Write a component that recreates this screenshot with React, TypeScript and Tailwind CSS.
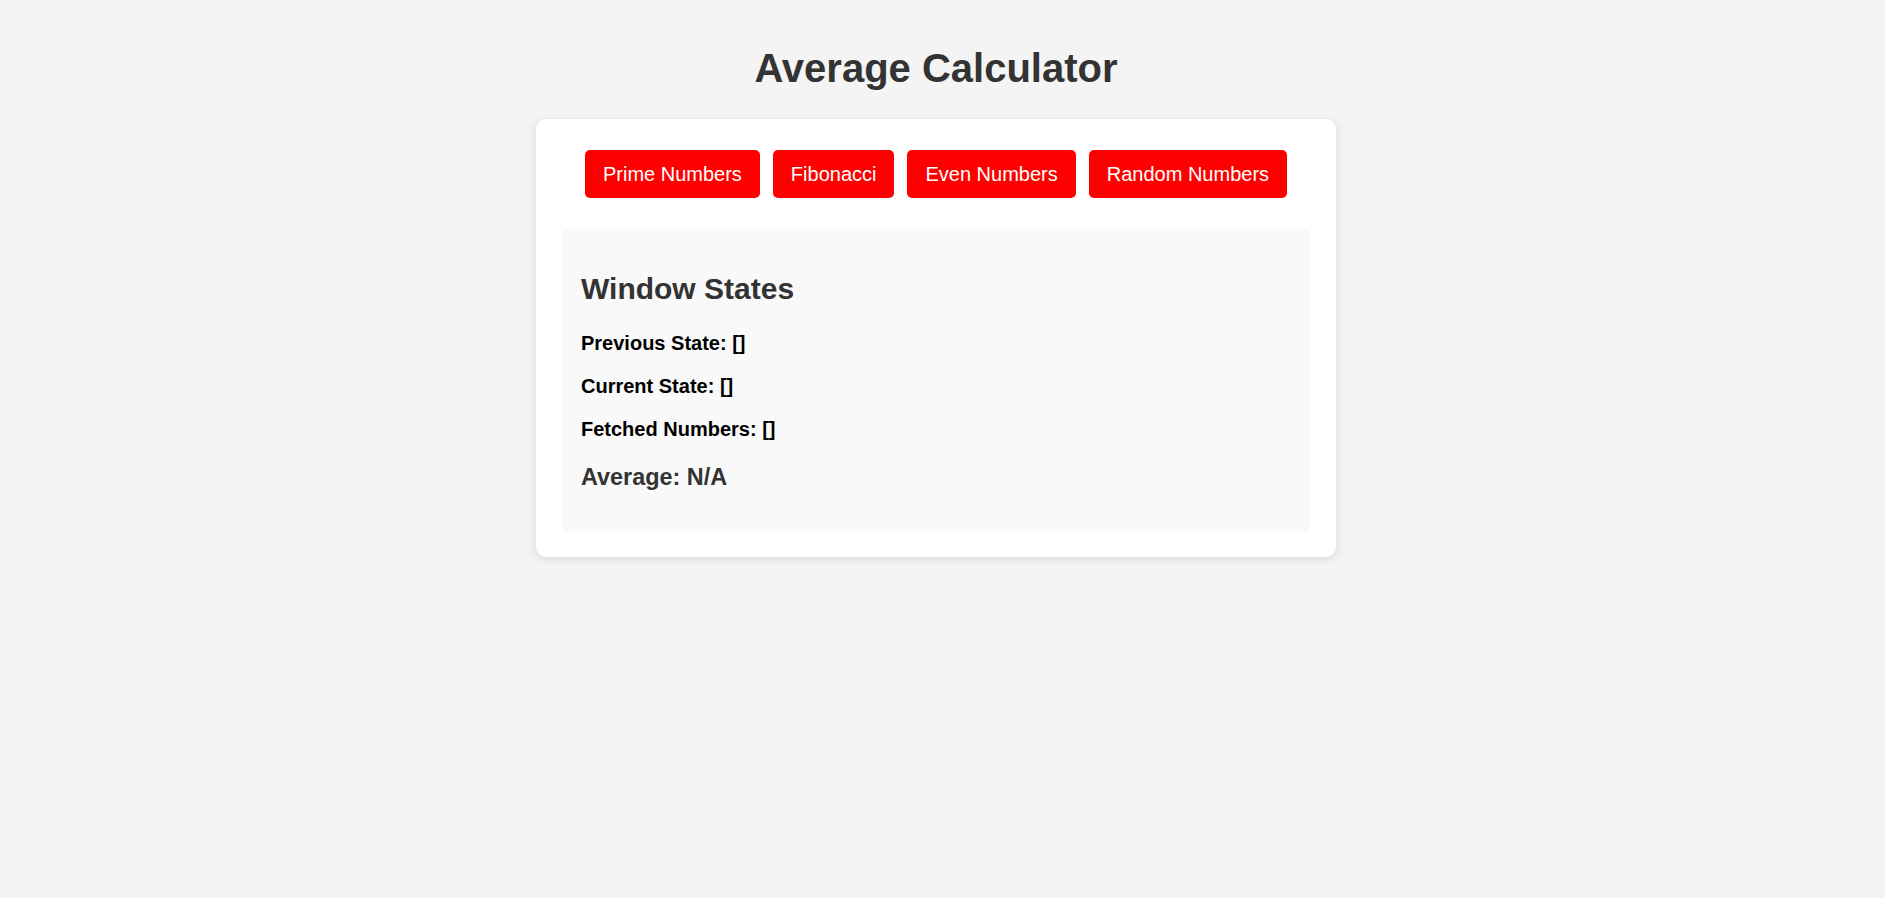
export default function App() {
  const sources = ["Prime Numbers", "Fibonacci", "Even Numbers", "Random Numbers"];

  const states = [
    { label: "Previous State:", value: "[]" },
    { label: "Current State:", value: "[]" },
    { label: "Fetched Numbers:", value: "[]" },
  ];

  return (
    <div className="min-h-screen w-full bg-[#f4f4f4] pt-[45px] pr-[13px] font-['Liberation_Sans',Arial,sans-serif]">
      <h1 className="text-center text-[40px] leading-[46px] font-bold text-[#333333] mb-[28px]">
        Average Calculator
      </h1>

      <div className="mx-auto w-[800px] rounded-[10px] bg-white p-[25px] shadow-[0_2px_10px_rgba(0,0,0,0.12)]">
        {/* source buttons */}
        <div className="flex justify-center gap-[13px] py-[6px] mb-[25px]">
          {sources.map((s) => (
            <button
              key={s}
              className="bg-[#ff0000] text-white text-[20px] leading-[24px] px-[18px] py-3 rounded-[5px] cursor-pointer"
            >
              {s}
            </button>
          ))}
        </div>

        <div className="flex flex-col rounded-[8px] bg-[#f9f9f9] px-[20px] pt-[20px] pb-[41px]">
          <h2 className="mt-[23px] text-[30px] leading-[34px] font-bold text-[#333333]">Window States</h2>
          <div className="mt-[26px] flex flex-col gap-[20px]">
            {states.map((st) => (
              <p key={st.label} className="text-[20px] leading-[23px] font-bold text-black">
                {st.label} {st.value}
              </p>
            ))}
          </div>
          <h3 className="mt-[23px] text-[23.4px] leading-[27px] font-bold text-[#333333]">Average: N/A</h3>
        </div>
      </div>
    </div>
  );
}
